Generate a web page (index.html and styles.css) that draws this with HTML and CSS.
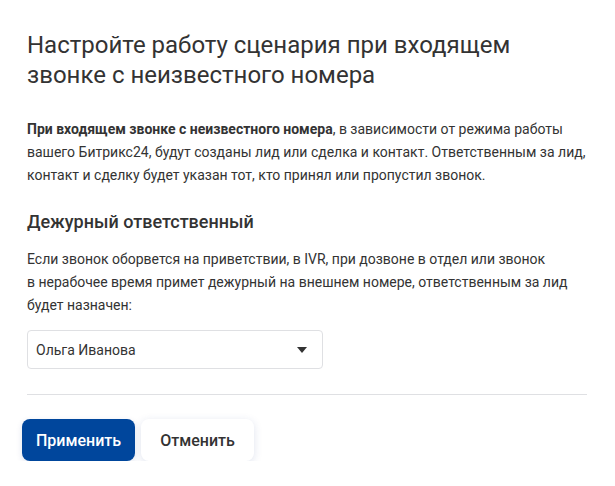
FILE: index.html
```html
<!DOCTYPE html>
<html lang="ru">
<head>
<meta charset="utf-8">
<link rel="stylesheet" href="styles.css">
</head>
<body>
<div class="page">
  <h1 class="title">Настройте работу сценария при входящем звонке с неизвестного номера</h1>
  <p class="text intro"><b>При входящем звонке с неизвестного номера</b>, в зависимости от режима работы вашего Битрикс24, будут созданы лид или сделка и контакт. Ответственным за лид, контакт и сделку будет указан тот, кто принял или пропустил звонок.</p>
  <h2 class="subtitle">Дежурный ответственный</h2>
  <p class="text desc">Если звонок оборвется на приветствии, в IVR, при дозвоне в отдел или звонок<br>в нерабочее время примет дежурный на внешнем номере, ответственным за лид будет назначен:</p>
  <div class="select">
    <span class="select-value">Ольга Иванова</span>
    <svg class="select-arrow" width="10" height="6" viewBox="0 0 10 6"><path d="M0 0 H10 L5 6 Z" fill="#333"/></svg>
  </div>
  <div class="divider"></div>
  <div class="actions">
    <button class="btn btn-primary">Применить</button>
    <button class="btn btn-secondary">Отменить</button>
  </div>
</div>
</body>
</html>
```
FILE: styles.css
```css
* { box-sizing: border-box; }
html, body { margin: 0; padding: 0; background: #fff; }
body { font-family: Roboto, "Noto Sans", sans-serif; color: #333; }
.page { padding: 30px 28px 0 27px; width: 615px; }
.title { margin: 0; font-size: 24px; line-height: 30px; font-weight: 400; color: #333; width: 540px; }
.text { margin: 0; font-size: 14px; line-height: 23px; color: #333; }
.text b { font-weight: 700; }
.intro { margin-top: 27.5px; }
.subtitle { margin: 23.5px 0 0; font-size: 18px; line-height: 24px; font-weight: 500; color: #333; }
.desc { margin-top: 13.5px; width: 550px; }
.select { margin-top: 13.5px; width: 296px; height: 39px; border: 1px solid #dfe0e3; border-radius: 4px; display: flex; align-items: center; justify-content: space-between; padding: 0 15px 0 8px; }
.select-value { font-size: 14px; color: #333; }
.divider { margin-top: 25px; height: 1px; background: #dfe0e3; }
.actions { margin-top: 24px; margin-left: -5px; display: flex; gap: 6px; }
.btn { height: 42px; width: 113px; border: none; border-radius: 8px; font-family: Roboto, "Noto Sans", sans-serif; font-size: 16px; font-weight: 500; cursor: pointer; }
.btn-primary { background: #00469c; color: #fff; box-shadow: 0 2px 6px rgba(0, 40, 120, 0.12); }
.btn-secondary { background: #fff; color: #333; box-shadow: 0 2px 8px rgba(40, 70, 140, 0.15); }
```
